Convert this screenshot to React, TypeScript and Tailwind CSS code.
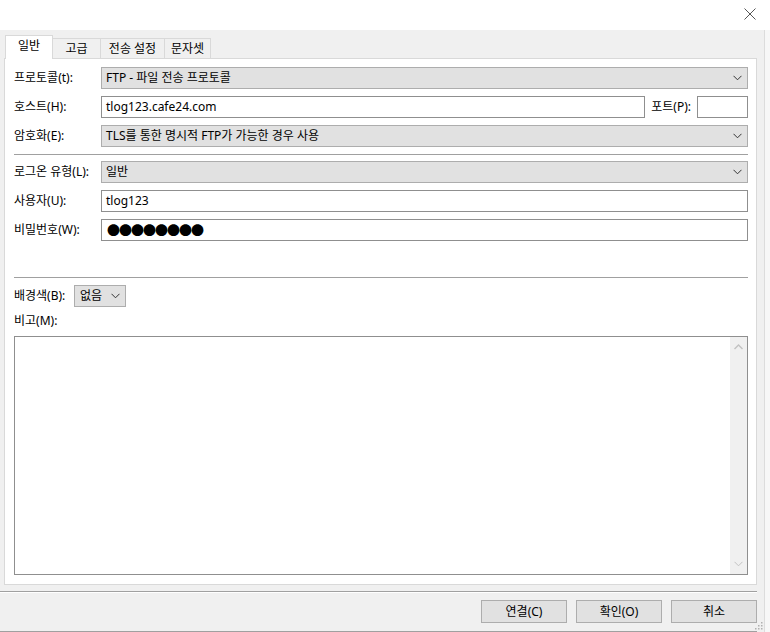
import React from "react";

const Chevron = ({ color = "#333" }: { color?: string }) => (
  <svg width="9" height="6" viewBox="0 0 9 6" className="shrink-0">
    <polyline points="0.5,0.8 4.5,4.8 8.5,0.8" fill="none" stroke={color} strokeWidth="1" />
  </svg>
);

const Select = ({ value, className = "" }: { value: string; className?: string }) => (
  <div
    className={`h-[22px] bg-[#e1e1e1] border border-[#adadad] flex items-center justify-between pl-[4px] pr-[5px] ${className}`}
  >
    <span className="leading-[16px] whitespace-nowrap">{value}</span>
    <Chevron />
  </div>
);

const Input = ({ value, className = "" }: { value?: string; className?: string }) => (
  <div className={`h-[22px] bg-white border border-[#8f8f8f] flex items-center pl-[4px] ${className}`}>
    <span className="leading-[16px] whitespace-nowrap">{value}</span>
  </div>
);

const Row = ({ label, children }: { label: string; children: React.ReactNode }) => (
  <div className="flex items-center h-[22px]">
    <div className="w-[87px] shrink-0 leading-[16px] whitespace-nowrap">{label}</div>
    <div className="flex-1 flex items-center gap-[6px]">{children}</div>
  </div>
);

export default function App() {
  return (
    <div className="w-[770px] h-[632px] bg-[#f0f0f0] flex flex-col overflow-hidden text-[12px] text-black font-['Segoe_UI','Noto_Sans','Noto_Sans_CJK_KR',sans-serif] relative">
      {/* title bar */}
      <div className="h-[30px] bg-white shrink-0 flex justify-end items-start pt-[8px] pr-[14px]">
        <svg width="12" height="12" viewBox="0 0 12 12">
          <line x1="0.5" y1="0.5" x2="11.5" y2="11.5" stroke="#555" strokeWidth="1" />
          <line x1="11.5" y1="0.5" x2="0.5" y2="11.5" stroke="#555" strokeWidth="1" />
        </svg>
      </div>

      <div className="flex flex-1">
        <div className="w-[764px] flex flex-col">
          <div className="pt-[5px] pl-[4px] pr-[7px]">
            {/* tabs */}
            <div className="flex items-end h-[23px] pl-[1px]">
              <div className="w-[48px] h-[24px] -mb-px relative z-10 bg-white border border-b-0 border-[#d9d9d9] flex justify-center pt-[2px]">
                <span className="leading-[16px]">일반</span>
              </div>
              <div className="w-[48px] h-[20px] border-t border-r border-[#d9d9d9] flex items-center justify-center">
                <span className="leading-[16px]">고급</span>
              </div>
              <div className="w-[64px] h-[20px] border-t border-r border-[#d9d9d9] flex items-center justify-center">
                <span className="leading-[16px]">전송 설정</span>
              </div>
              <div className="w-[46px] h-[20px] border-t border-r border-[#d9d9d9] flex items-center justify-center">
                <span className="leading-[16px]">문자셋</span>
              </div>
            </div>

            {/* panel */}
            <div className="h-[527px] bg-white border border-[#d9d9d9] pt-[8px] pl-[9px] pr-[8px] flex flex-col">
              <div className="flex flex-col gap-[7px]">
                <Row label="프로토콜(t):">
                  <Select value="FTP - 파일 전송 프로토콜" className="flex-1" />
                </Row>
                <Row label="호스트(H):">
                  <Input value="tlog123.cafe24.com" className="flex-1" />
                  <span className="leading-[16px] whitespace-nowrap">포트(P):</span>
                  <Input className="w-[51px]" />
                </Row>
                <Row label="암호화(E):">
                  <Select value="TLS를 통한 명시적 FTP가 가능한 경우 사용" className="flex-1" />
                </Row>
              </div>
              <div className="h-px bg-[#a0a0a0] mt-[7px]" />
              <div className="flex flex-col gap-[7px] mt-[6px]">
                <Row label="로그온 유형(L):">
                  <Select value="일반" className="flex-1" />
                </Row>
                <Row label="사용자(U):">
                  <Input value="tlog123" className="flex-1" />
                </Row>
                <Row label="비밀번호(W):">
                  <div className="flex-1 h-[22px] bg-white border border-[#8f8f8f] flex items-center pl-[5px]">
                    <span className="leading-[16px] text-[13px] tracking-[-1px] font-['Noto_Sans_CJK_KR',sans-serif]">
                      ●●●●●●●●
                    </span>
                  </div>
                </Row>
              </div>
              <div className="h-px bg-[#a0a0a0] mt-[36px]" />
              <div className="flex items-center h-[22px] mt-[7px]">
                <span className="leading-[16px] whitespace-nowrap w-[60px]">배경색(B):</span>
                <div className="w-[52px] h-[22px] bg-[#e1e1e1] border border-[#adadad] flex items-center justify-between pl-[5px] pr-[5px]">
                  <span className="leading-[16px]">없음</span>
                  <Chevron />
                </div>
              </div>
              <div className="leading-[16px] mt-[6px]">비고(M):</div>
              <div className="mt-[7px] h-[239px] border border-[#8f8f8f] bg-white flex justify-end">
                <div className="w-[17px] bg-[#f0f0f0] flex flex-col items-center justify-between py-[7px]">
                  <svg width="9" height="6" viewBox="0 0 9 6">
                    <polyline points="0.5,5 4.5,1 8.5,5" fill="none" stroke="#c2c2c2" strokeWidth="1.4" />
                  </svg>
                  <Chevron color="#c2c2c2" />
                </div>
              </div>
            </div>
          </div>

          <div className="h-px bg-[#a0a0a0] mt-[6px] w-[757px]" />
          <div className="h-px bg-white w-[757px]" />

          <div className="flex justify-end gap-[9px] pr-[7px] mt-[7px]">
            {["연결(C)", "확인(O)", "취소"].map((t) => (
              <div
                key={t}
                className="w-[86px] h-[23px] bg-[#e1e1e1] border border-[#adadad] flex items-center justify-center"
              >
                <span className="leading-[16px]">{t}</span>
              </div>
            ))}
          </div>
          <div className="flex-1" />
          <div className="h-px bg-[#a0a0a0] w-[757px]" />
        </div>
        <div className="flex-1 border-l border-[#dcdcdc] bg-[#f7f7f7]" />
      </div>

      {/* resize grip */}
      <svg width="8" height="8" viewBox="0 0 8 8" className="absolute right-[7px] bottom-[2px]">
        <rect x="6" y="0" width="1.5" height="1.5" fill="#b0b0b0" />
        <rect x="3" y="3" width="1.5" height="1.5" fill="#b0b0b0" />
        <rect x="6" y="3" width="1.5" height="1.5" fill="#b0b0b0" />
        <rect x="0" y="6" width="1.5" height="1.5" fill="#b0b0b0" />
        <rect x="3" y="6" width="1.5" height="1.5" fill="#b0b0b0" />
        <rect x="6" y="6" width="1.5" height="1.5" fill="#b0b0b0" />
      </svg>
    </div>
  );
}
